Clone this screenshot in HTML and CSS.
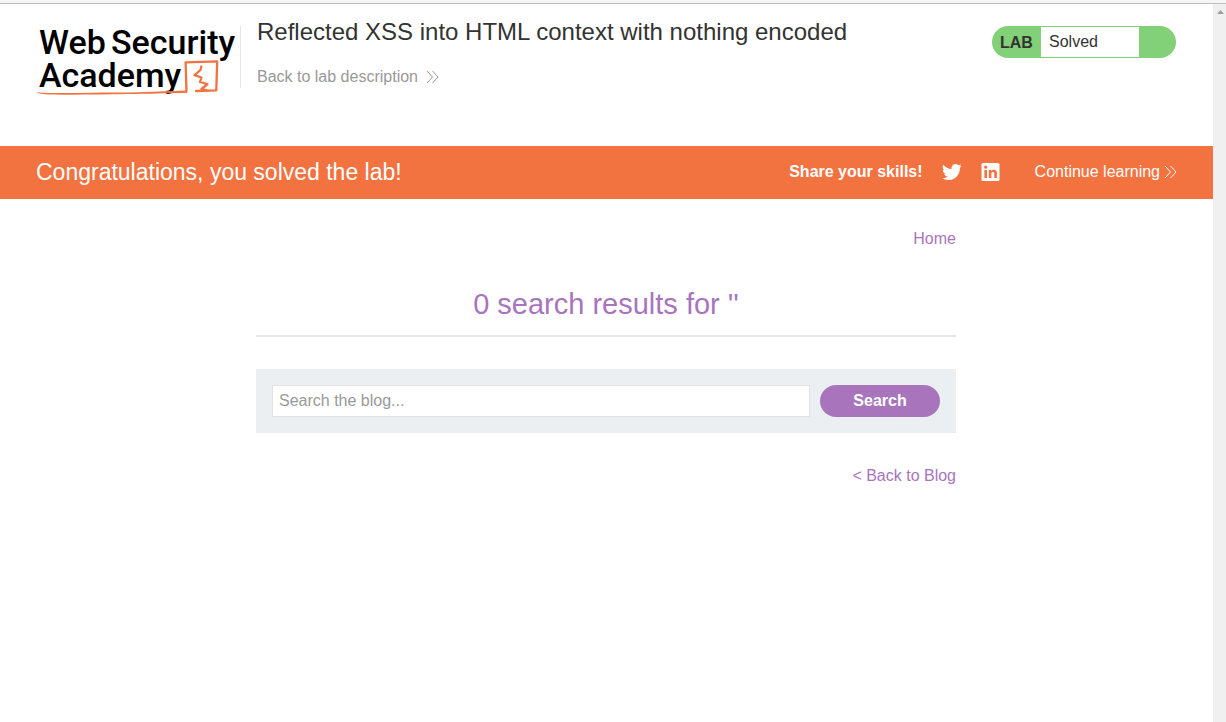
FILE: index.html
```html
<!DOCTYPE html>
<html lang="en">
<head>
<meta charset="utf-8">
<title>Reflected XSS into HTML context with nothing encoded</title>
<meta name="viewport" content="width=device-width, initial-scale=1">
<link rel="stylesheet" href="styles.css">
</head>
<body>
<div class="window-edge"></div>
<div class="viewport">
  <div class="page">
    <header class="lab-header">
      <a class="logo" href="#" aria-label="Web Security Academy">
        <svg width="204" height="76" viewBox="0 0 204 76">
          <g class="logo-text">
            <text x="3" y="30">Web</text>
            <text x="75" y="30">Security</text>
            <text x="3" y="63">Academy</text>
          </g>
          <path d="M0 68.200C25 70 60 68.200 95 68.600L151 66.600V68.800C120 69.800 45 71.200 14 70.400Q3 70 0 68.200Z" fill="#f27240"/>
          <path d="M150.500 67.300L149.600 38.300L181.200 37.300L180.300 66.400L160 67" fill="none" stroke="#f27240" stroke-width="2.3" stroke-linejoin="round" stroke-linecap="round"/>
          <path d="M165.300 42.500L164.500 46L158.500 51.200L165.500 53.500L164 58L171.500 60L165.500 65L170 66" fill="none" stroke="#f27240" stroke-width="2.3" stroke-linejoin="round" stroke-linecap="round"/>
        </svg>
      </a>
      <div class="heading">
        <h1 class="lab-title">Reflected XSS into HTML context with nothing encoded</h1>
        <a class="lab-link" href="#">Back to lab description
          <svg class="chevrons" width="13" height="14" viewBox="0 0 13 14"><path d="M1 1L6.500 7L1 13M6.500 1L12 7L6.500 13"/></svg>
        </a>
      </div>
      <div class="lab-status"><span class="status-label">LAB</span><span class="status-value">Solved</span></div>
    </header>
    <section class="banner">
      <h2 class="banner-title">Congratulations, you solved the lab!</h2>
      <div class="share">
        <span class="share-label">Share your skills!</span>
        <a class="share-link" href="#" aria-label="Twitter">
          <svg width="20" height="20" viewBox="0 0 24 24" fill="#fff"><path d="M23.600 4.600a9.700 9.700 0 0 1-2.800.8 4.900 4.900 0 0 0 2.100-2.700 9.800 9.800 0 0 1-3.100 1.200 4.900 4.900 0 0 0-8.300 4.500A13.900 13.900 0 0 1 1.600 3.200a4.900 4.900 0 0 0 1.500 6.500 4.900 4.900 0 0 1-2.200-.6v.1a4.900 4.900 0 0 0 3.900 4.800 4.900 4.900 0 0 1-2.200.1 4.900 4.900 0 0 0 4.600 3.400A9.900 9.900 0 0 1 0 19.500 13.900 13.900 0 0 0 7.500 21.700c9.100 0 14-7.500 14-14v-.6a10 10 0 0 0 2.100-2.500z"/></svg>
        </a>
        <a class="share-link" href="#" aria-label="LinkedIn">
          <svg width="20" height="20" viewBox="0 0 20 20"><rect x=".5" y="1" width="18" height="18" rx="1.500" fill="#fff"/><g fill="#f27240"><circle cx="4.700" cy="5.200" r="1.600"/><path d="M3.400 8H6V16H3.400ZM7.800 8H10.300V9.100C11.700 7 15.900 7.400 15.900 11V16H13.300V11.600C13.300 9.300 10.400 9.400 10.400 11.600V16H7.800Z"/></g></svg>
        </a>
        <a class="continue" href="#">Continue learning
          <svg class="chevrons" width="13" height="14" viewBox="0 0 13 14"><path d="M1 1L6.500 7L1 13M6.500 1L12 7L6.500 13"/></svg>
        </a>
      </div>
    </section>
    <main class="blog">
      <nav class="blog-nav"><a href="#">Home</a></nav>
      <h2 class="results">0 search results for ''</h2>
      <form class="search">
        <input class="search-box" type="text" name="search" placeholder="Search the blog..." aria-label="Search the blog">
        <button class="search-button" type="submit">Search</button>
      </form>
      <div class="blog-back"><a href="#">&lt; Back to Blog</a></div>
    </main>
  </div>
  <div class="scrollbar"><svg width="7" height="4" viewBox="0 0 7 4"><path d="M0 4L3.500 0L7 4Z" fill="#a0a0a0"/></svg></div>
</div>
</body>
</html>
```

FILE: styles.css
```css
* { box-sizing: border-box; }

body {
  margin: 0;
  min-height: 100vh;
  display: flex;
  flex-direction: column;
  background: #fff;
  color: #333332;
  font: 16px/20px "Liberation Sans", Arial, sans-serif;
}

a { text-decoration: none; }
h1, h2 { margin: 0; font-weight: 400; }
svg { display: block; }

.window-edge {
  height: 4px;
  background: #f6f6f6;
  border-bottom: 1px solid #bebebe;
}

.viewport { flex: 1; display: flex; }
.page { flex: 1; min-width: 0; }

.scrollbar {
  width: 13px;
  padding: 6px 0 0 4px;
  background: #f0f0f0;
}

.lab-header {
  display: flex;
  align-items: flex-start;
  min-height: 142px;
  padding: 0 37px 0 36px;
}

.logo { margin-top: 20px; }
.logo svg { overflow: visible; }
.logo-text {
  font-family: Roboto, sans-serif;
  font-size: 34px;
  font-weight: 500;
  fill: #000;
}

.heading {
  flex: 1;
  margin-top: 22px;
  min-height: 62px;
  padding-left: 16px;
  border-left: 1px solid #e6e6e6;
}
.lab-title {
  margin-top: -8px;
  font-size: 24px;
  line-height: 28px;
}
.lab-link {
  display: inline-flex;
  align-items: center;
  gap: 8px;
  margin-top: 21px;
  color: #999;
}
.chevrons { fill: none; stroke: currentColor; stroke-width: 1; }

.lab-status {
  display: flex;
  width: 184px;
  height: 32px;
  margin-top: 22px;
  padding: 1px 0;
  border-radius: 16px;
  background: #82d077;
  line-height: 30px;
}
.status-label { width: 49px; padding: 1px 0 0 8px; font-weight: 700; }
.status-value { width: 98px; padding-left: 8px; background: #fff; }

.banner {
  display: flex;
  align-items: center;
  justify-content: space-between;
  min-height: 53px;
  padding: 0 36px 2px;
  background: #f27240;
  color: #fff;
}
.banner-title { font-size: 23px; line-height: 28px; }
.share { display: flex; align-items: center; }
.share-label { font-weight: 700; }
.share-link { margin-left: 19px; }
.continue {
  display: flex;
  align-items: center;
  gap: 4px;
  margin-left: 34px;
  color: #fff;
}

.blog {
  max-width: 701px;
  margin: 0 auto;
  padding: 30px 1px 0 0;
}
.blog a { color: #a875bd; }
.blog-nav, .blog-back { text-align: right; }
.results {
  margin-top: 38px;
  padding-bottom: 14px;
  border-bottom: 2px solid #e6e6e6;
  color: #a875bd;
  font-size: 29px;
  line-height: 34px;
  text-align: center;
}
.search {
  display: flex;
  gap: 10px;
  margin: 32px 0 33px;
  padding: 16px;
  background: #ebeff2;
}
.search-box {
  flex: 1;
  min-width: 0;
  height: 32px;
  padding: 0 6px;
  border: 1px solid #e2e2e2;
  background: #fff;
  color: #333332;
  font: inherit;
}
.search-box::placeholder { color: #999; }
.search-button {
  width: 120px;
  height: 32px;
  padding: 0;
  border: 0;
  border-radius: 16px;
  background: #a875bd;
  color: #fff;
  font: inherit;
  font-weight: 700;
}
```
